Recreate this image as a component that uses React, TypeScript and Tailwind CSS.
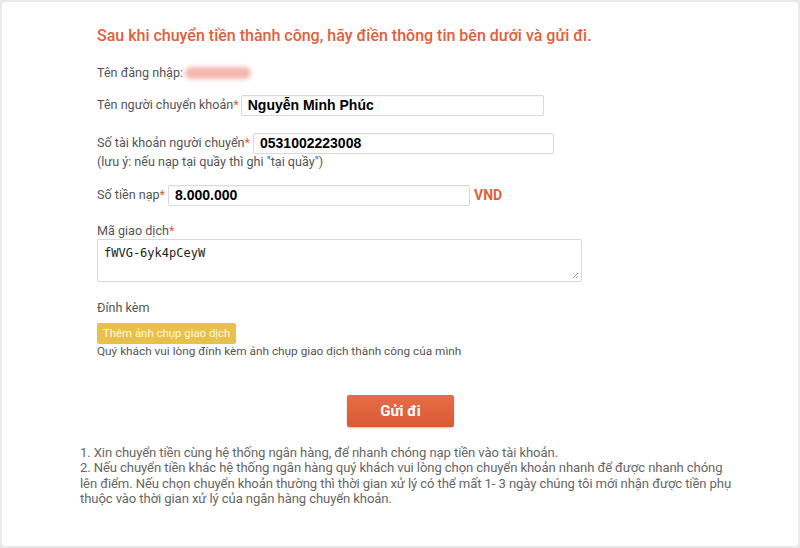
import React from "react";

const label = "text-[12.6px] text-[#555]";
const star = <span className="text-[#e0603c]">*</span>;
const input =
  "h-[21px] rounded-[2px] border border-[#d9d9d9] bg-white px-[6px] text-[14px] font-bold leading-[19px] text-black font-['Liberation_Sans',Arial,sans-serif] shadow-[inset_0_1px_1px_rgba(0,0,0,0.04)]";

export default function App() {
  return (
    <div className="h-[548px] w-[800px] bg-[#e9e9e9] p-[2px] font-['Roboto',Arial,sans-serif]">
      <div className="h-full rounded-[4px] bg-white">
        <div className="pl-[95px] pt-[22px]">
          <h1 className="text-[16px] font-medium leading-[24px] text-[#e0603c]">
            Sau khi chuyển tiền thành công, hãy điền thông tin bên dưới và gửi đi.
          </h1>

          <div className="mt-[14px] flex h-[22px] items-center gap-[2px]">
            <span className={label}>Tên đăng nhập:</span>
            <span className="h-[12px] w-[66px] rounded-full bg-[#f0a79a] opacity-80 blur-[2px]" />
          </div>

          <div className="mt-[11px] flex items-center gap-[2px]">
            <span className={label}>Tên người chuyển khoản{star}</span>
            <div className={`${input} w-[303px]`}>Nguyễn Minh Phúc</div>
          </div>

          <div className="mt-[17px] flex items-center gap-[3px]">
            <span className={label}>Số tài khoản người chuyển{star}</span>
            <div className={`${input} w-[301px]`}>0531002223008</div>
          </div>
          <div className={`${label} leading-[16px]`}>(lưu ý: nếu nạp tại quầy thì ghi "tại quầy")</div>

          <div className="mt-[15px] flex items-center gap-[3px]">
            <span className={label}>Số tiền nạp{star}</span>
            <div className={`${input} w-[302px]`}>8.000.000</div>
            <span className="ml-[1px] text-[14px] font-bold text-[#e0603c]">VND</span>
          </div>

          <div className={`${label} mt-[17px] leading-[16px]`}>Mã giao dịch{star}</div>
          <div className="relative h-[43px] w-[485px] rounded-[2px] border border-[#d9d9d9] bg-white px-[6px] py-[5px] font-['DejaVu_Sans_Mono',monospace] text-[12px] leading-[16px] text-[#222]">
            fWVG-6yk4pCeyW
            <svg className="absolute bottom-[2px] right-[2px]" width="7" height="7" viewBox="0 0 7 7">
              <path d="M6 1L1 6M6 4L4 6" stroke="#999" strokeWidth="1" />
            </svg>
          </div>

          <div className={`${label} mt-[17px] leading-[18px]`}>Đính kèm</div>
          <div className="mt-[6px] inline-flex h-[21px] items-center rounded-[2px] bg-[#e8c04a] px-[6px] text-[11.4px] text-[#fff8e0]">
            Thêm ảnh chụp giao dịch
          </div>
          <div className="text-[11.8px] leading-[14px] text-[#555]">
            Quý khách vui lòng đính kèm ảnh chụp giao dịch thành công của mình
          </div>

          <div className="mt-[37px] flex pl-[250px]">
            <div className="flex h-[32px] w-[107px] items-center justify-center rounded-[2px] bg-gradient-to-b from-[#e66d47] to-[#d95a35] text-[15px] font-bold text-white shadow-[0_1px_2px_rgba(0,0,0,0.25)]">
              Gửi đi
            </div>
          </div>
        </div>

        <div className="mt-[18px] w-[770px] pl-[78px] text-[13.1px] leading-[15.4px] tracking-[-0.1px] text-[#666]">
          <p>1. Xin chuyển tiền cùng hệ thống ngân hàng, để nhanh chóng nạp tiền vào tài khoản.</p>
          <p>
            2. Nếu chuyển tiền khác hệ thống ngân hàng quý khách vui lòng chọn chuyển khoản nhanh để được nhanh chóng
            <br />
            lên điểm. Nếu chọn chuyển khoản thường thì thời gian xử lý có thể mất 1- 3 ngày chúng tôi mới nhận được tiền phụ
            <br />
            thuộc vào thời gian xử lý của ngân hàng chuyển khoản.
          </p>
        </div>
      </div>
    </div>
  );
}
